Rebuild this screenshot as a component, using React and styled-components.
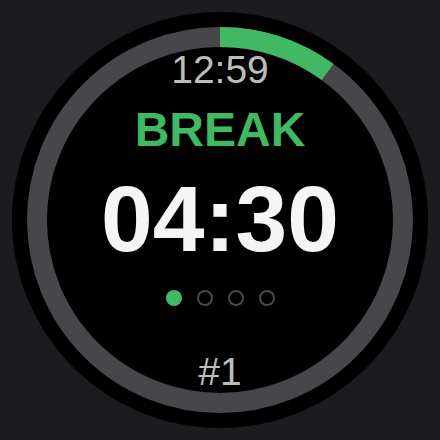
import React from 'react';
import styled, { createGlobalStyle } from 'styled-components';

const RING_RADIUS = 183;
const RING_WIDTH = 20;
const CIRCUMFERENCE = 2 * Math.PI * RING_RADIUS;

const GlobalStyle = createGlobalStyle`
  html, body {
    margin: 0;
    padding: 0;
    background-color: #1c1c20;
  }

  body {
    font-family: 'Liberation Sans', Arial, sans-serif;
  }
`;

const Screen = styled.div`
  width: 440px;
  height: 440px;

  display: flex;
  align-items: center;
  justify-content: center;
`;

const Face = styled.div`
  position: relative;

  width: 416px;
  height: 416px;

  border-radius: 50%;
  background-color: #000000;
`;

const RingSvg = styled.svg`
  position: absolute;
  top: 0;
  left: 0;

  width: 100%;
  height: 100%;
`;

const Content = styled.div`
  position: relative;

  display: flex;
  flex-direction: column;
  align-items: center;

  padding-top: 38px;
`;

const Clock = styled.div`
  font-size: 39px;
  line-height: 39px;
  color: #bdbdbd;
`;

const Phase = styled.div`
  margin-top: 17px;

  font-size: 48px;
  line-height: 48px;
  font-weight: 700;
  color: #41b862;
`;

const Timer = styled.div`
  margin-top: 18px;

  font-size: 93px;
  line-height: 94px;
  font-weight: 700;
  color: #f5f5f5;
`;

const Dots = styled.div`
  display: flex;
  gap: 15px;

  margin-top: 24px;
`;

const Dot = styled.div`
  box-sizing: border-box;

  width: 16px;
  height: 16px;

  border-radius: 50%;
  background-color: ${(props) => (props.$active ? '#41b862' : 'transparent')};
  border: ${(props) => (props.$active ? 'none' : '2px solid #4a4a4e')};
`;

const Round = styled.div`
  margin-top: 46px;

  font-size: 39px;
  line-height: 39px;
  color: #bdbdbd;
`;

function ProgressRing({ progress }) {
  const dash = CIRCUMFERENCE * progress;

  return (
    <RingSvg viewBox="0 0 416 416">
      <circle
        cx="208"
        cy="208"
        r={RING_RADIUS}
        fill="none"
        stroke="#47474b"
        strokeWidth={RING_WIDTH}
      />
      <circle
        cx="208"
        cy="208"
        r={RING_RADIUS}
        fill="none"
        stroke="#41b862"
        strokeWidth={RING_WIDTH}
        strokeDasharray={`${dash} ${CIRCUMFERENCE}`}
        transform="rotate(-90 208 208)"
      />
    </RingSvg>
  );
}

function PageDots({ count, active }) {
  return (
    <Dots>
      {Array.from({ length: count }).map((_, i) => (
        <Dot key={i} $active={i === active} />
      ))}
    </Dots>
  );
}

export default function App() {
  return (
    <>
      <GlobalStyle />
      <Screen>
        <Face>
          <ProgressRing progress={0.1} />
          <Content>
            <Clock>12:59</Clock>
            <Phase>BREAK</Phase>
            <Timer>04:30</Timer>
            <PageDots count={4} active={0} />
            <Round>#1</Round>
          </Content>
        </Face>
      </Screen>
    </>
  );
}
